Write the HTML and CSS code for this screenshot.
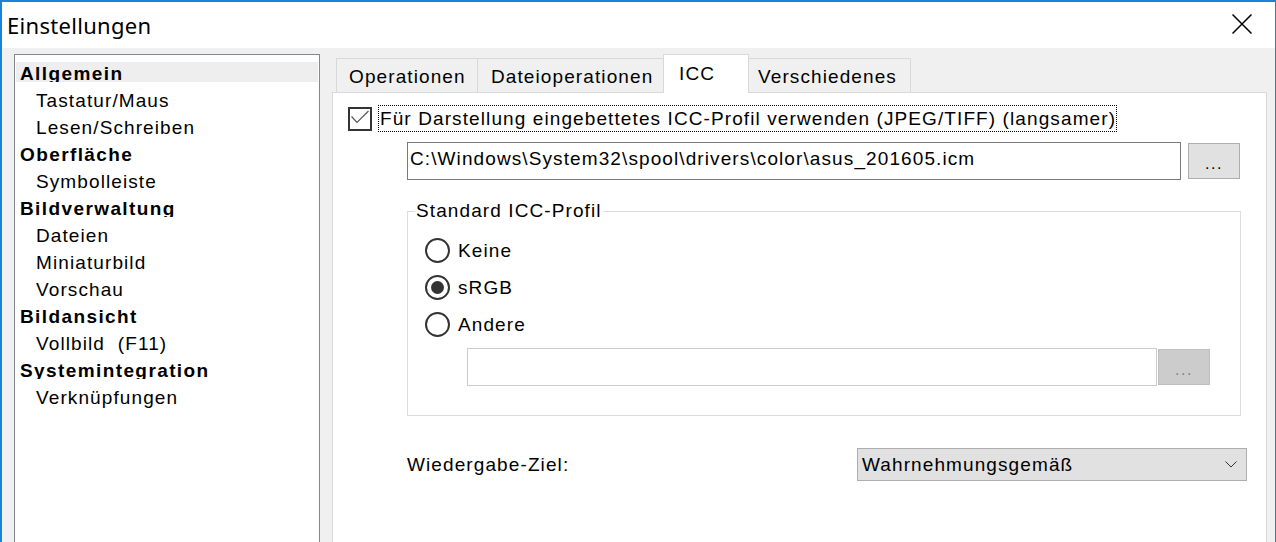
FILE: index.html
```html
<!DOCTYPE html>
<html lang="de">
<head>
<meta charset="utf-8">
<title>Einstellungen</title>
<link rel="stylesheet" href="styles.css">
</head>
<body>
<div class="window">
  <div class="titlebar">
    <div class="title">Einstellungen</div>
    <div class="close">
      <svg width="20" height="20" viewBox="0 0 20 20"><path d="M0.5 0.5 L19.5 19.5 M19.5 0.5 L0.5 19.5" stroke="#000" stroke-width="1.5" fill="none"/></svg>
    </div>
  </div>
  <div class="content">
    <div class="tree">
      <div class="row cat sel"><span class="lbl">Allgemein</span></div>
      <div class="row sub"><span class="lbl">Tastatur/Maus</span></div>
      <div class="row sub"><span class="lbl">Lesen/Schreiben</span></div>
      <div class="row cat"><span class="lbl">Oberfläche</span></div>
      <div class="row sub"><span class="lbl">Symbolleiste</span></div>
      <div class="row cat"><span class="lbl">Bildverwaltung</span></div>
      <div class="row sub"><span class="lbl">Dateien</span></div>
      <div class="row sub"><span class="lbl">Miniaturbild</span></div>
      <div class="row sub"><span class="lbl">Vorschau</span></div>
      <div class="row cat"><span class="lbl">Bildansicht</span></div>
      <div class="row sub"><span class="lbl">Vollbild&nbsp; (F11)</span></div>
      <div class="row cat"><span class="lbl">Systemintegration</span></div>
      <div class="row sub"><span class="lbl">Verknüpfungen</span></div>
    </div>
    <div class="right">
      <div class="tabs">
        <div class="tab t1">Operationen</div>
        <div class="tab t2">Dateioperationen</div>
        <div class="tab t3 active">ICC</div>
        <div class="tab t4">Verschiedenes</div>
      </div>
      <div class="panel">
        <div class="check-row">
          <div class="checkbox">
            <svg width="20" height="20" viewBox="0 0 20 20"><path d="M1.5 7.5 L7 13.5 L18.5 2" stroke="#555" stroke-width="1.2" fill="none"/></svg>
          </div>
          <div class="check-label">Für Darstellung eingebettetes ICC-Profil verwenden (JPEG/TIFF) (langsamer)</div>
        </div>
        <div class="path-row">
          <div class="field">C:\Windows\System32\spool\drivers\color\asus_201605.icm</div>
          <div class="btn">...</div>
        </div>
        <fieldset class="group">
          <legend>Standard ICC-Profil</legend>
          <div class="group-body">
            <div class="radio-row"><span class="radio"></span><span class="rlabel">Keine</span></div>
            <div class="radio-row"><span class="radio on"></span><span class="rlabel">sRGB</span></div>
            <div class="radio-row"><span class="radio"></span><span class="rlabel">Andere</span></div>
            <div class="other-row">
              <div class="field2"></div>
              <div class="btn2">...</div>
            </div>
          </div>
        </fieldset>
        <div class="target-row">
          <div class="target-label">Wiedergabe-Ziel:</div>
          <div class="combo">
            <span>Wahrnehmungsgemäß</span>
            <svg width="12" height="7" viewBox="0 0 12 7"><path d="M0.5 0.5 L6 6 L11.5 0.5" stroke="#333" stroke-width="1" fill="none"/></svg>
          </div>
        </div>
      </div>
    </div>
  </div>
</div>
</body>
</html>
```

FILE: styles.css
```css
* { box-sizing: border-box; }
html, body { margin: 0; padding: 0; }
body {
  width: 1276px;
  height: 542px;
  overflow: hidden;
  font-family: "Liberation Sans", Arial, sans-serif;
  font-size: 19px;
  letter-spacing: 1.1px;
  color: #000;
  background: #f0f0f0;
}
.window {
  width: 1276px;
  height: 542px;
  border-top: 2px solid #1883d7;
  border-left: 2px solid #1883d7;
  border-right: 1px solid #1883d7;
  display: flex;
  flex-direction: column;
  overflow: hidden;
}
.titlebar {
  height: 46px;
  flex: none;
  background: #fff;
  display: flex;
  align-items: flex-start;
  justify-content: space-between;
}
.title {
  font-family: "Noto Sans", "Open Sans", sans-serif;
  font-size: 22px;
  letter-spacing: 0.3px;
  line-height: 46px;
  padding-left: 5px;
}
.close {
  width: 20px;
  height: 20px;
  margin-top: 12px;
  margin-right: 23px;
}
.close svg { display: block; }
.content {
  flex: 1;
  display: flex;
  gap: 12px;
  padding: 6px 8px 0 12px;
  background: #f0f0f0;
}
.tree {
  width: 306px;
  flex: none;
  border: 1px solid #828790;
  border-bottom: none;
  background: #fff;
  padding: 7px 1px 0 1px;
}
.row {
  height: 27px;
  line-height: 24px;
  white-space: nowrap;
}
.row .lbl { display: block; }
.row.cat .lbl {
  font-weight: bold;
  letter-spacing: 1.4px;
  height: 20px;
  overflow: hidden;
  padding-left: 4px;
}
.row.sub .lbl { padding-left: 20px; }
.row.sel .lbl { background: #eeeeee; }
.right {
  width: 935px;
  flex: none;
  display: flex;
  flex-direction: column;
}
.tabs {
  display: flex;
  align-items: flex-end;
  padding-left: 4px;
  height: 38px;
  flex: none;
}
.tab {
  height: 34px;
  border: 1px solid #d9d9d9;
  border-bottom: none;
  background: #f0f0f0;
  line-height: 34px;
  white-space: nowrap;
  padding-top: 1px;
  overflow: hidden;
}
.tab + .tab { margin-left: -1px; }
.t1 { width: 142px; padding-left: 12px; }
.t2 { width: 187px; padding-left: 13px; }
.t3 { width: 86px; padding-left: 15px; }
.t4 { width: 163px; padding-left: 9px; }
.tab.active {
  position: relative;
  z-index: 1;
  height: 39px;
  margin-bottom: -1px;
  background: #fff;
  padding-top: 0;
  line-height: 38px;
}
.panel {
  flex: 1;
  background: #fff;
  border: 1px solid #d9d9d9;
  border-bottom: none;
}
.check-row {
  display: flex;
  align-items: center;
  margin: 12px 0 0 15px;
  height: 27px;
}
.checkbox {
  width: 24px;
  height: 24px;
  border: 2px solid #333;
  flex: none;
}
.checkbox svg { display: block; }
.check-label {
  margin-left: 6px;
  border: 1px dotted #000;
  height: 27px;
  line-height: 25px;
  padding: 0 0 0 1px;
  white-space: nowrap;
}
.path-row {
  display: flex;
  align-items: center;
  margin: 10px 0 0 74px;
  gap: 7px;
}
.field {
  width: 774px;
  height: 38px;
  border: 1px solid #7a7a7a;
  line-height: 32px;
  padding-left: 2px;
  white-space: nowrap;
  overflow: hidden;
}
.btn {
  width: 52px;
  height: 36px;
  background: #e1e1e1;
  border: 1px solid #adadad;
  text-align: center;
  line-height: 40px;
  font-size: 16px;
  letter-spacing: 1.6px;
}
.group {
  margin: 21px 0 0 74px;
  padding: 0;
  width: 834px;
  border: 1px solid #dcdcdc;
  min-inline-size: 0;
}
.group legend {
  margin-left: 7px;
  padding: 0 1px;
  line-height: 20px;
}
.group-body {
  padding: 11px 0 29px 17px;
}
.radio-row {
  height: 37px;
  display: flex;
  align-items: center;
}
.radio {
  width: 25px;
  height: 25px;
  border: 2px solid #333;
  border-radius: 50%;
  flex: none;
  display: flex;
  align-items: center;
  justify-content: center;
}
.radio.on::after {
  content: "";
  width: 13px;
  height: 13px;
  border-radius: 50%;
  background: #333;
}
.rlabel {
  margin-left: 8px;
  line-height: 20px;
}
.other-row {
  display: flex;
  align-items: center;
  margin: 5px 0 0 42px;
  gap: 1px;
}
.field2 {
  width: 690px;
  height: 38px;
  border: 1px solid #cccccc;
  background: #fff;
}
.btn2 {
  width: 52px;
  height: 36px;
  background: #cccccc;
  border: 1px solid #bfbfbf;
  color: #838383;
  text-align: center;
  line-height: 40px;
  font-size: 16px;
  letter-spacing: 1.6px;
}
.target-row {
  display: flex;
  align-items: center;
  margin: 32px 0 0 74px;
}
.target-label {
  width: 450px;
  line-height: 20px;
}
.combo {
  width: 390px;
  height: 33px;
  background: #e1e1e1;
  border: 1px solid #adadad;
  display: flex;
  align-items: center;
  justify-content: space-between;
  padding: 0 9px 0 4px;
  line-height: 20px;
}
.combo svg { display: block; }
```
